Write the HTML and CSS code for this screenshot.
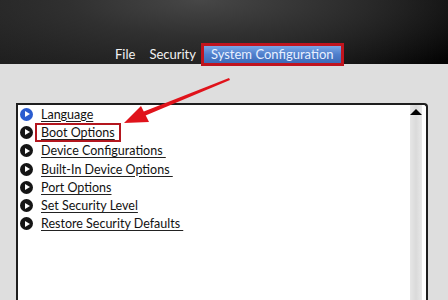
FILE: index.html
```html
<!DOCTYPE html>
<html>
<head>
<meta charset="utf-8">
<link rel="stylesheet" href="styles.css">
</head>
<body>
<header class="top">
  <nav class="menu">
    <span class="menu-item">File</span>
    <span class="menu-item">Security</span>
    <span class="menu-item active">System Configuration</span>
  </nav>
</header>
<main class="content">
  <section class="panel">
    <ul class="list">
      <li class="row"><span class="bullet blue"></span><span class="label">Language</span></li>
      <li class="row"><span class="bullet"></span><span class="label boxed">Boot Options</span></li>
      <li class="row"><span class="bullet"></span><span class="label">Device Configurations&nbsp;</span></li>
      <li class="row"><span class="bullet"></span><span class="label">Built-In Device Options&nbsp;</span></li>
      <li class="row"><span class="bullet"></span><span class="label">Port Options</span></li>
      <li class="row"><span class="bullet"></span><span class="label">Set Security Level</span></li>
      <li class="row"><span class="bullet"></span><span class="label">Restore Security Defaults&nbsp;</span></li>
    </ul>
    <div class="scroll"><span class="up"></span></div>
  </section>
</main>
<svg class="arrow" width="448" height="300" viewBox="0 0 448 300">
  <polygon points="229,78 230,80 142,117 140,113" fill="#e0131b"/>
  <polygon points="124,123 141,106 149,122" fill="#e0131b"/>
</svg>
</body>
</html>
```
FILE: styles.css
```css
html, body {
  margin: 0;
  padding: 0;
}
body {
  width: 448px;
  height: 300px;
  overflow: hidden;
  background: #dedede;
  font-family: Lato, "Open Sans", sans-serif;
  position: relative;
}
.top {
  height: 64px;
  background:
    radial-gradient(ellipse 330px 90px at 200px 0px, #474747 0%, #303030 40%, rgba(10,10,10,0) 100%),
    linear-gradient(90deg, #1c1c1c, #141414 60%, #030303);
  display: flex;
  align-items: flex-end;
}
.menu {
  display: flex;
  align-items: center;
  padding-left: 108px;
  height: 22px;
  margin-bottom: -1px;
}
.menu-item {
  color: #f2f2f2;
  font-size: 13px;
  padding: 0 7px;
  line-height: 18px;
}
.active {
  margin-left: 1px;
  padding: 0 7px;
  color: #e8f0ff;
  background: linear-gradient(#7aa6e6, #4f7fcc 50%, #3d6bb8);
  outline: 3px solid #c0141e;
  outline-offset: 0;
  line-height: 17px;
}
.content {
  padding: 39px 20px 0 16px;
}
.panel {
  height: 200px;
  background: #fff;
  border: 2px solid #1e1e1e;
  border-bottom: none;
  border-radius: 0 4px 0 0;
  display: flex;
}
.list {
  list-style: none;
  margin: 0;
  padding: 0 0 0 2px;
  flex: 1;
}
.row {
  display: flex;
  align-items: center;
  height: 18.3px;
  font-size: 12.5px;
  color: #111;
}
.bullet {
  width: 13px;
  height: 13px;
  border-radius: 50%;
  background: #151515;
  position: relative;
  margin-right: 8px;
  flex: none;
}
.bullet::after {
  content: "";
  position: absolute;
  left: 5px;
  top: 3.5px;
  border-left: 5px solid #fff;
  border-top: 3px solid transparent;
  border-bottom: 3px solid transparent;
}
.bullet.blue {
  background: #2a5cd0;
}
.label {
  text-decoration: underline;
  text-decoration-color: #222;
  text-underline-offset: 2px;
  white-space: pre;
}
.boxed {
  outline: 2px solid #b3161e;
  outline-offset: 0;
  padding: 0 4px;
  margin-left: -4px;
}
.scroll {
  width: 12px;
  margin-right: 4px;
  background: linear-gradient(90deg, #e6e6e6, #dadada 50%, #e8e8e8);
  position: relative;
}
.up {
  position: absolute;
  left: 0;
  top: 4px;
  border-bottom: 6px solid #000;
  border-left: 6px solid transparent;
  border-right: 6px solid transparent;
}
.arrow {
  position: absolute;
  left: 0;
  top: 0;
  pointer-events: none;
}
```
